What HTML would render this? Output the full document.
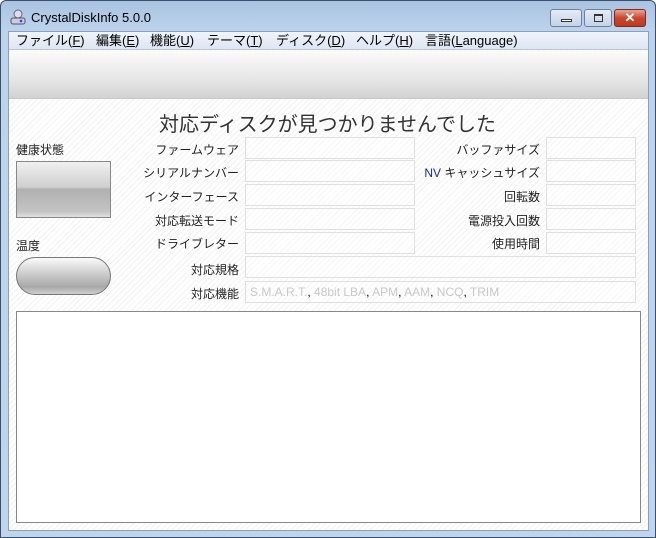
<!DOCTYPE html><html><head><meta charset="utf-8"><style>
*{margin:0;padding:0;box-sizing:border-box}
body{width:656px;height:538px;overflow:hidden;background:#fff;font-family:"Liberation Sans","Noto Sans CJK JP",sans-serif;font-size:12px;color:#000;position:relative}
.win{position:absolute;left:0;top:0;width:656px;height:538px;background:linear-gradient(#a9c3e0,#bcd3ec 30px,#bfd5ee);border:1px solid #3a4f6a;border-radius:6px 6px 0 0}
.title{position:absolute;left:30px;top:9px;font-size:13px;color:#000}
.client{position:absolute;left:7px;top:30px;width:641px;height:500px;background:repeating-linear-gradient(135deg,#fff 0 3px,#f3f3f3 3px 4px);border:1px solid #8aa0bc}
.menu{position:absolute;left:0;top:0;width:639px;height:18px;background:linear-gradient(#f0f3fa,#dfe6f3);border-bottom:1px solid #b9c5d9;font-size:13px;line-height:17px}
.menu span{position:absolute;top:0}
.tb{position:absolute;left:0;top:19px;width:639px;height:48px;background:linear-gradient(#fbfbfb,#e6e6e6 60%,#d3d3d3);border-bottom:1px solid #c8c8c8}
.h{position:absolute;left:-2px;width:641px;text-align:center;top:76px;font-size:20px;color:#333}
.lab{position:absolute;text-align:right;font-size:12px;color:#222}
.box{position:absolute;height:22px;border:1px solid #e0e0e0;background:rgba(255,255,255,.3)}
.btn{position:absolute;top:8px;height:18px;border:1px solid #6d7f99;border-radius:3px;background:linear-gradient(#e4ecf6,#c4d3e6)}
</style></head><body>
<div class="win">
<svg style="position:absolute;left:8px;top:7px" width="18" height="18"><circle cx="9" cy="6" r="4" fill="#dde" stroke="#667" /><rect x="2" y="10" width="14" height="6" rx="2" fill="#ccd" stroke="#556"/><circle cx="12" cy="13" r="1.3" fill="#24f"/></svg>
<div class="title">CrystalDiskInfo 5.0.0</div>
<div class="btn" style="left:549px;width:32px"><div style="position:absolute;left:10px;top:9px;width:11px;height:3px;border:1px solid #333;background:#fff"></div></div>
<div class="btn" style="left:583px;width:28px"><div style="position:absolute;left:9px;top:4px;width:9px;height:8px;border:1px solid #333;border-top-width:2px"></div></div>
<div class="btn" style="left:613px;width:32px;background:linear-gradient(#e9a493,#c9472f 50%,#c0391f);border-color:#7a2a1e;color:#fff;text-align:center;font-weight:bold;font-size:13px;line-height:16px">✕</div>
<div class="client">
<div class="menu"><span style="left:7px">ファイル(<u>F</u>)</span><span style="left:87px">編集(<u>E</u>)</span><span style="left:141px">機能(<u>U</u>)</span><span style="left:198px">テーマ(<u>T</u>)</span><span style="left:267px">ディスク(<u>D</u>)</span><span style="left:347px">ヘルプ(<u>H</u>)</span><span style="left:416px">言語(<u>L</u>anguage)</span></div>
<div class="tb"></div>
<div class="h">対応ディスクが見つかりませんでした</div>
<div class="lab" style="left:7px;top:109px">健康状態</div>
<div style="position:absolute;left:7px;top:129px;width:95px;height:57px;border:1px solid #888;background:linear-gradient(#f0f0f0,#d0d0d0 45%,#b0b0b0 50%,#c4c4c4 90%,#e0e0e0)"></div>
<div class="lab" style="left:7px;top:205px">温度</div>
<div style="position:absolute;left:7px;top:225px;width:95px;height:38px;border:1px solid #777;border-radius:19px;background:linear-gradient(#fafafa,#d0d0d0 40%,#a8a8a8 80%,#cfcfcf)"></div>
<div class="lab" style="left:88px;width:142px;top:109px">ファームウェア</div>
<div class="lab" style="left:88px;width:142px;top:132px">シリアルナンバー</div>
<div class="lab" style="left:88px;width:142px;top:156px">インターフェース</div>
<div class="lab" style="left:88px;width:142px;top:180px">対応転送モード</div>
<div class="lab" style="left:88px;width:142px;top:203px">ドライブレター</div>
<div class="lab" style="left:88px;width:142px;top:229px">対応規格</div>
<div class="lab" style="left:88px;width:142px;top:253px">対応機能</div>
<div class="box" style="left:236px;width:170px;top:105px"></div>
<div class="box" style="left:236px;width:170px;top:128px"></div>
<div class="box" style="left:236px;width:170px;top:152px"></div>
<div class="box" style="left:236px;width:170px;top:176px"></div>
<div class="box" style="left:236px;width:170px;top:200px"></div>
<div class="box" style="left:236px;width:391px;top:224px"></div>
<div class="box" style="left:236px;width:391px;top:249px;color:#c8c8c8;padding-left:4px;line-height:20px">S.M.A.R.T.<span style="color:#000">,</span> 48bit LBA<span style="color:#000">,</span> APM<span style="color:#000">,</span> AAM<span style="color:#000">,</span> NCQ<span style="color:#000">,</span> TRIM</div>
<div class="lab" style="left:398px;width:133px;top:109px">バッファサイズ</div>
<div class="lab" style="left:398px;width:133px;top:132px"><span style="color:#1a2a9a">NV</span> キャッシュサイズ</div>
<div class="lab" style="left:398px;width:133px;top:156px">回転数</div>
<div class="lab" style="left:398px;width:133px;top:180px">電源投入回数</div>
<div class="lab" style="left:398px;width:133px;top:203px">使用時間</div>
<div class="box" style="left:537px;width:90px;top:105px"></div>
<div class="box" style="left:537px;width:90px;top:128px"></div>
<div class="box" style="left:537px;width:90px;top:152px"></div>
<div class="box" style="left:537px;width:90px;top:176px"></div>
<div class="box" style="left:537px;width:90px;top:200px"></div>
<div style="position:absolute;left:7px;top:279px;width:625px;height:212px;border:1px solid #888;background:#fff"></div>
</div></div>
</body></html>
